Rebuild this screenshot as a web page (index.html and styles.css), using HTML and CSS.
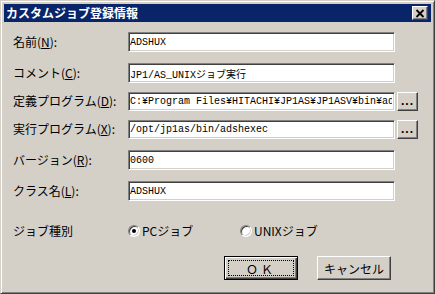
FILE: index.html
```html
<!DOCTYPE html>
<html>
    <head>
        <meta charset="utf-8" />
        <title>カスタムジョブ登録情報</title>
        <link rel="stylesheet" href="styles.css">
    </head>
    <body>
        <div class="window">
            <!-- タイトルバー -->
            <div class="titlebar">
                <span class="caption">カスタムジョブ登録情報</span>
                <button type="button" class="close-btn" aria-label="閉じる">
                    <svg width="10" height="9" viewBox="0 0 10 9">
                        <path d="M1.5 1 L8.5 8 M8.5 1 L1.5 8" stroke="#000" stroke-width="1.8" fill="none" />
                    </svg>
                </button>
            </div>

            <!-- 入力フォーム -->
            <form class="form">
                <label class="label" for="name">名前(<u>N</u>):</label>
                <input class="field" type="text" id="name" value="ADSHUX">

                <label class="label" for="comment">コメント(<u>C</u>):</label>
                <input class="field" type="text" id="comment" value="JP1/AS_UNIXジョブ実行">

                <label class="label" for="defProgram">定義プログラム(<u>D</u>):</label>
                <input class="field short" type="text" id="defProgram" value="C:¥Program Files¥HITACHI¥JP1AS¥JP1ASV¥bin¥adshexec.exe">
                <button type="button" class="browse">...</button>

                <label class="label" for="execProgram">実行プログラム(<u>X</u>):</label>
                <input class="field short" type="text" id="execProgram" value="/opt/jp1as/bin/adshexec">
                <button type="button" class="browse">...</button>

                <label class="label" for="version">バージョン(<u>R</u>):</label>
                <input class="field" type="text" id="version" value="0600">

                <label class="label" for="className">クラス名(<u>L</u>):</label>
                <input class="field" type="text" id="className" value="ADSHUX">

                <span class="label">ジョブ種別</span>
                <div class="radios">
                    <label class="radio"><span class="dot checked"></span>PCジョブ</label>
                    <label class="radio"><span class="dot"></span>UNIXジョブ</label>
                </div>

                <!-- 下部ボタン -->
                <div class="footer-buttons">
                    <button type="submit" class="push default"><span class="focus">ＯＫ</span></button>
                    <button type="button" class="push">キャンセル</button>
                </div>
            </form>
        </div>
    </body>
</html>
```

FILE: styles.css
```css
/* 全体 */
body {
    margin: 0;
    background-color: #d4d0c8;
    font-family: "Noto Sans CJK JP", sans-serif;
    font-size: 12px;
    color: #000;
}

/* ダイアログの枠 (クラシック風) */
.window {
    width: 435px;
    height: 294px;
    box-sizing: border-box;
    border: 1px solid;
    border-color: #d4d0c8 #404040 #404040 #d4d0c8;
    box-shadow: inset 1px 1px #fff, inset -1px -1px #808080;
    padding: 3px;
    background-color: #d4d0c8;
}

/* タイトルバー */
.titlebar {
    height: 18px;
    background-color: #0a246a;
    color: #fff;
    display: flex;
    align-items: center;
    justify-content: space-between;
    padding: 0 3px 0 2px;
}

.caption {
    font-weight: bold;
    line-height: 18px;
}

.close-btn {
    width: 16px;
    height: 14px;
    padding: 0;
    border: 1px solid;
    border-color: #fff #404040 #404040 #fff;
    box-shadow: inset -1px -1px #808080;
    background-color: #d4d0c8;
    display: flex;
    align-items: center;
    justify-content: center;
}

/* フォームのグリッド */
.form {
    display: grid;
    grid-template-columns: 113px 267px 21px;
    grid-template-rows: 32px 30px 26px 30px 32px 30px 50px 24px;
    column-gap: 2px;
    align-items: center;
    padding: 4px 0 0 9px;
    margin: 0;
}

.label {
    grid-column: 1;
    line-height: 14px;
    white-space: nowrap;
}

.label u {
    text-underline-offset: 1px;
}

/* 入力欄 (へこみ枠) */
.field {
    grid-column: 2;
    height: 20px;
    box-sizing: border-box;
    margin: 0;
    padding: 0 2px 0 1px;
    border: 1px solid;
    border-color: #808080 #fff #fff #808080;
    box-shadow: inset 1px 1px #404040, inset -1px -1px #d4d0c8;
    background-color: #fff;
    font-family: "Liberation Mono", "Noto Sans CJK JP", monospace;
    font-size: 10px;
    color: #000;
    outline: none;
}

.field.short {
    height: 19px;
}

/* 参照ボタン */
.browse {
    grid-column: 3;
    width: 21px;
    height: 19px;
    padding: 0 0 3px;
    border: 1px solid;
    border-color: #fff #404040 #404040 #fff;
    box-shadow: inset -1px -1px #808080;
    background-color: #d4d0c8;
    font-family: "Liberation Sans", sans-serif;
    font-size: 12px;
    font-weight: bold;
    line-height: 12px;
    letter-spacing: 1px;
    display: flex;
    align-items: flex-end;
    justify-content: center;
}

/* ラジオボタン */
.radios {
    grid-column: 2 / 4;
    display: flex;
}

.radio {
    display: flex;
    align-items: center;
    gap: 2px;
    width: 112px;
    line-height: 14px;
}

.dot {
    width: 12px;
    height: 12px;
    box-sizing: border-box;
    border-radius: 50%;
    border: 1px solid;
    border-color: #808080 #fff #fff #808080;
    box-shadow: inset 1px 1px #404040, inset -1px -1px #d4d0c8;
    background-color: #fff;
    display: flex;
    align-items: center;
    justify-content: center;
}

.dot.checked::after {
    content: "";
    width: 4px;
    height: 4px;
    border-radius: 50%;
    background-color: #000;
}

/* 下部ボタン */
.footer-buttons {
    grid-column: 1 / -1;
    display: flex;
    gap: 19px;
    padding-left: 211px;
}

.push {
    width: 74px;
    height: 24px;
    box-sizing: border-box;
    padding: 0;
    border: 1px solid;
    border-color: #fff #404040 #404040 #fff;
    box-shadow: inset -1px -1px #808080;
    background-color: #d4d0c8;
    font-family: "Noto Sans CJK JP", sans-serif;
    font-size: 12px;
    color: #000;
}

.push.default {
    border-color: #000;
    box-shadow: inset 1px 1px #fff, inset -1px -1px #404040, inset -2px -2px #808080;
    padding: 3px;
}

.focus {
    display: flex;
    align-items: center;
    justify-content: center;
    height: 100%;
    border: 1px dotted #000;
    box-sizing: border-box;
    letter-spacing: 3px;
}
```
